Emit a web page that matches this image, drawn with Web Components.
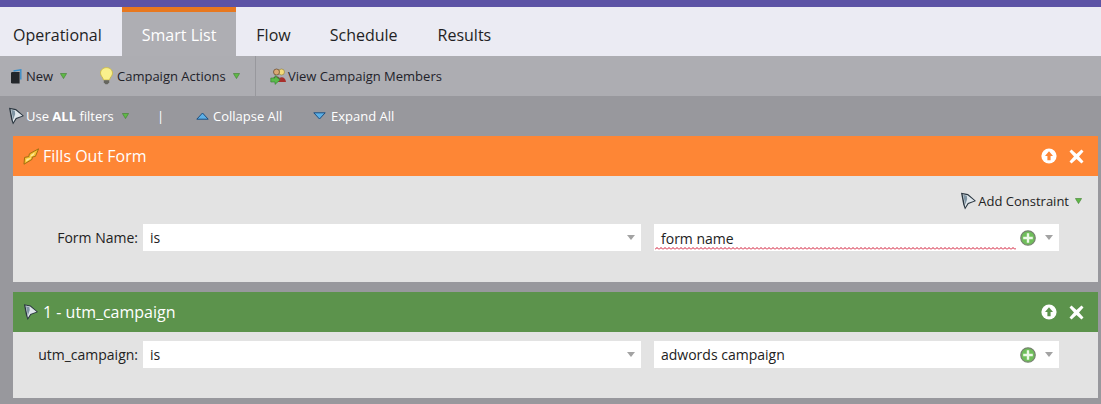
<!DOCTYPE html>
<html>
<head>
<meta charset="utf-8">
<title>Smart List</title>
<style>
  html, body { margin: 0; padding: 0; background: #98989d; }
  body { font-family: "Open Sans", "Liberation Sans", sans-serif; width: 1101px; height: 404px; overflow: hidden; }
</style>
</head>
<body>
<app-tabs>
  <tab-item>Operational</tab-item>
  <tab-item active>Smart List</tab-item>
  <tab-item>Flow</tab-item>
  <tab-item>Schedule</tab-item>
  <tab-item>Results</tab-item>
</app-tabs>
<main-toolbar></main-toolbar>
<filter-bar></filter-bar>
<filter-card color="#fe8635" icon="pencil" heading="Fills Out Form" label="Form Name:" value="form name" constraint></filter-card>
<filter-card color="#5c934c" icon="funnel" heading="1 - utm_campaign" label="utm_campaign:" value="adwords campaign"></filter-card>

<script>
// shared icon strings
const icons = {
  funnel: `<svg width="17" height="18" viewBox="0 0 17 18"><path d="M1 .8 L8 2 L16 9 L8.5 12 L5 17.5 L3.2 12.5 Z" fill="#2a3640"/><path d="M2.6 2.2 L7.6 3.2 L14.4 8.8 L7.8 11 L5.2 15.2 L4.4 11 Z" fill="#dfe6eb"/><path d="M3.2 2.8 L6.8 3.8 L7.2 7 L6 10.4 L5.2 12.6 Z" fill="#7d93a2"/></svg>`,
  pencil: `<svg width="16" height="17" viewBox="0 0 16 17"><path d="M1 16.2 L1.6 9.4 L5.8 8.6 L6.4 5.8 L15.6 .8 L12.4 8.4 L9.4 9 L9 11.4 Z" fill="#f7c233" stroke="#96690f" stroke-width=".9" stroke-linejoin="round"/><path d="M3 13.8 L3.4 10.8 L7.2 10 L7.8 7 L12 4.2 L10.4 7.6 L8 8.4 L7.6 10.8 Z" fill="#fdeb9a"/></svg>`,
  book: `<svg width="12" height="15" viewBox="0 0 12 15"><path d="M3.5 2 L10.8 .8 V10.5" fill="none" stroke="#3b8ec9" stroke-width="1.4"/><path d="M1 4 Q1 3 2.5 3 H9.6 V14.5 H2.5 Q1 14.5 1 13.2 Z" fill="#23262b"/></svg>`,
  bulb: `<svg width="13" height="18" viewBox="0 0 13 18"><path d="M6.5 .6 C10 .6 12.5 3 12.5 6.2 C12.5 9 10 10 9.5 13 H3.5 C3 10 .5 9 .5 6.2 C.5 3 3 .6 6.5 .6 Z" fill="#f9f08c" stroke="#c9b63c" stroke-width=".8"/><path d="M3.8 13.2 H9.2 V15.5 L7.5 17.2 H5.5 L3.8 15.5 Z" fill="#66665f"/></svg>`,
  members: `<svg width="17" height="17" viewBox="0 0 17 17"><circle cx="11.5" cy="4" r="3" fill="#f3da78" stroke="#8d7a35" stroke-width=".6"/><path d="M8 14 C8 7.5 15.5 7.5 16 14 Z" fill="#a8302c"/><circle cx="6.5" cy="4" r="3" fill="#d9a873" stroke="#5e442a" stroke-width=".7"/><path d="M2.5 12 C3 7 10 7 10.5 12 Z" fill="#6f5a45"/><path d="M.8 10 H5 V7.6 L10 12 L5 16.4 V14 H.8 Z" fill="#5abb4b" stroke="#2f7d2c" stroke-width=".6"/></svg>`,
  caret: `<svg width="7" height="6" viewBox="0 0 7 6"><path d="M.4 .5 H6.6 L3.5 5.6 Z" fill="#5fb846" stroke="#3f7f30" stroke-width=".6"/></svg>`,
  collapse: `<svg width="13" height="8" viewBox="0 0 13 8"><path d="M.8 7.2 L6.5 1 L12.2 7.2 Z" fill="#5db0e6" stroke="#1d4f80" stroke-width="1"/></svg>`,
  expand: `<svg width="13" height="8" viewBox="0 0 13 8"><path d="M.8 .8 L6.5 7 L12.2 .8 Z" fill="#5db0e6" stroke="#1d4f80" stroke-width="1"/></svg>`,
  up: `<svg width="16" height="16" viewBox="0 0 16 16"><circle cx="8" cy="8" r="7.6" fill="#fff"/><path d="M8 3.2 L12 8 H9.6 V12.2 H6.4 V8 H4 Z" fill="var(--c)"/></svg>`,
  close: `<svg width="15" height="15" viewBox="0 0 15 15"><path d="M2.5 .6 L7.5 5 L12.5 .6 L14.5 2.6 L10 7.5 L14.5 12.4 L12.5 14.4 L7.5 10 L2.5 14.4 L.5 12.4 L5 7.5 L.5 2.6 Z" fill="#fff"/></svg>`,
  plus: `<svg width="16" height="16" viewBox="0 0 16 16"><circle cx="8" cy="8" r="7.2" fill="#6fbe5a" stroke="#76836f" stroke-width="1.3"/><path d="M6.8 3.2 H9.2 V6.8 H12.8 V9.2 H9.2 V12.8 H6.8 V9.2 H3.2 V6.8 H6.8 Z" fill="#edf9e8"/></svg>`
};

class TabItem extends HTMLElement {
  constructor() {
    super();
    this.attachShadow({ mode: "open" });
    this.shadowRoot.innerHTML = `
      <style>
        :host { display: block; box-sizing: border-box; height: 49px; padding: 6px 20px 0; line-height: 44px; font-size: 16px; color: #1f1f24; }
        :host(:first-child) { padding-left: 13px; padding-right: 20px; }
        :host(:nth-child(3)) { padding-right: 19px; }
        :host([active]) { background: #aeaeb3; color: #fff; border-top: 5px solid #e8781f; padding: 1px 20px 0 20px; }
      </style>
      <slot></slot>`;
  }
}
customElements.define("tab-item", TabItem);

class AppTabs extends HTMLElement {
  constructor() {
    super();
    this.attachShadow({ mode: "open" });
    this.shadowRoot.innerHTML = `
      <style>
        :host { display: flex; height: 49px; background: #ebebf3; border-top: 7px solid #5c53a5; }
      </style>
      <slot></slot>`;
  }
}
customElements.define("app-tabs", AppTabs);

class MainToolbar extends HTMLElement {
  constructor() {
    super();
    this.attachShadow({ mode: "open" });
    this.shadowRoot.innerHTML = `
      <style>
        :host { display: flex; align-items: center; height: 40px; background: #adadb2; font-size: 13px; color: #22222a; }
        .item { display: flex; align-items: center; }
        .new { margin-left: 10px; gap: 4px; width: 90px; }
        .new svg:last-child { margin-left: 3px; }
        .actions { gap: 4px; width: 155px; }
        .actions svg:last-child { margin-left: 3px; }
        .members { border-left: 1px solid #98989d; height: 40px; padding-left: 14px; gap: 1px; }
      </style>
      <div class="item new">${icons.book}<span>New</span>${icons.caret}</div>
      <div class="item actions">${icons.bulb}<span>Campaign Actions</span>${icons.caret}</div>
      <div class="item members">${icons.members}<span>View Campaign Members</span></div>`;
  }
}
customElements.define("main-toolbar", MainToolbar);

class FilterBar extends HTMLElement {
  constructor() {
    super();
    this.attachShadow({ mode: "open" });
    this.shadowRoot.innerHTML = `
      <style>
        :host { display: flex; align-items: center; height: 40px; background: #98989d; font-size: 13px; color: #fff; }
        .item { display: flex; align-items: center; }
        .use { margin-left: 8px; gap: 1px; width: 149px; }
        .use svg:last-child { margin-left: 7px; }
        .sep { width: 39px; }
        .collapse { gap: 4px; width: 117px; }
        .expand { gap: 5px; }
      </style>
      <div class="item use">${icons.funnel}<span>Use <b>ALL</b> filters</span>${icons.caret}</div>
      <div class="sep">|</div>
      <div class="item collapse">${icons.collapse}<span>Collapse All</span></div>
      <div class="item expand">${icons.expand}<span>Expand All</span></div>`;
  }
}
customElements.define("filter-bar", FilterBar);

class SelectField extends HTMLElement {
  constructor() {
    super();
    this.attachShadow({ mode: "open" });
    this.shadowRoot.innerHTML = `
      <style>
        :host { display: flex; align-items: center; box-sizing: border-box; height: 27px; background: #fff; padding: 0 6px 0 7px; font-size: 14px; color: #222; position: relative; }
        .text { flex: 1; padding-top: 1px; }
        :host(:not([spell])) .text { padding-top: 0; }
        .arrow { width: 0; height: 0; border: 4.5px solid transparent; border-top: 5px solid #a3a3a3; border-bottom: 0; margin-left: 9px; }
        .spell { display: none; position: absolute; left: 1px; bottom: 1px; width: calc(100% - 44px); height: 3px; }
        :host([spell]) .spell { display: block; }
      </style>
      <span class="text"><slot></slot></span>
      <slot name="extra"></slot>
      <span class="arrow"></span>
      <svg class="spell"><defs><pattern id="w" width="4" height="3" patternUnits="userSpaceOnUse"><path d="M0 2.5 L2 .5 L4 2.5" fill="none" stroke="#d0122f" stroke-width="1"/></pattern></defs><rect width="100%" height="3" fill="url(#w)"/></svg>`;
  }
}
customElements.define("select-field", SelectField);

class FilterCard extends HTMLElement {
  connectedCallback() {
    const root = this.attachShadow({ mode: "open" });
    const color = this.getAttribute("color");
    const hasConstraint = this.hasAttribute("constraint");
    root.innerHTML = `
      <style>
        :host { display: block; margin: 0 3px 10px 13px; background: #e3e3e3; --c: ${color}; }
        header { display: flex; align-items: center; height: 40px; background: ${color}; color: #fff; font-size: 16px; padding: 0 14px 0 10px; }
        header > svg { width: 16px; flex: none; }
        .title { flex: 1; margin-left: 4px; }
        .tools { display: flex; gap: 12px; align-items: center; }
        .constraint { display: flex; justify-content: flex-end; align-items: center; height: 48px; padding: 2px 16px 0 0; box-sizing: border-box; gap: 1px; font-size: 13px; color: #222; }
        .constraint svg:last-child { margin-left: 5px; }
        .row { display: grid; grid-template-columns: 125px 498px 405px; align-items: center; font-size: 14px; color: #222; padding: ${hasConstraint ? "0 0 31px" : "9px 0 30px"}; }
        .row label { text-align: right; }
        .row select-field:nth-child(2) { margin-left: 5px; width: 498px; }
        .row select-field:nth-child(3) { margin-left: 18px; width: 405px; }
        .plus { display: flex; }
      </style>
      <header>
        ${icons[this.getAttribute("icon")]}
        <span class="title">${this.getAttribute("heading")}</span>
        <span class="tools">${icons.up}${icons.close}</span>
      </header>
      ${hasConstraint ? `<div class="constraint">${icons.funnel}<span>Add Constraint</span>${icons.caret}</div>` : ""}
      <div class="row">
        <label>${this.getAttribute("label")}</label>
        <select-field>is</select-field>
        <select-field ${hasConstraint ? "spell" : ""}>${this.getAttribute("value")}<span class="plus" slot="extra">${icons.plus}</span></select-field>
      </div>`;
  }
}
customElements.define("filter-card", FilterCard);
</script>
</body>
</html>
